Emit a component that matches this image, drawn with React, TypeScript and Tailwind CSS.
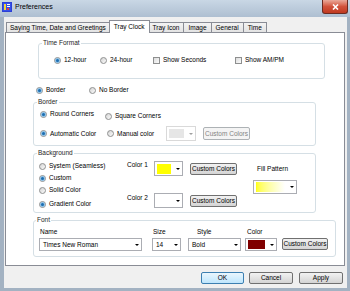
import type { ReactNode } from "react";

function Radio({ checked }: { checked?: boolean }) {
  return (
    <span className="flex h-[7px] w-[7px] shrink-0 items-center justify-center rounded-full border border-[#8e8f8f] bg-linear-to-br from-[#d4d4d4] to-[#fbfbfb]">
      {checked ? (
        <span className="h-[3px] w-[3px] rounded-full bg-[#1d6db0] shadow-[0_0_0_1px_#8cc0e6]" />
      ) : null}
    </span>
  );
}

function Checkbox() {
  return (
    <span className="h-[7px] w-[7px] shrink-0 border border-[#8e8f8f] bg-linear-to-br from-[#dcdcdc] to-[#fbfbfb]" />
  );
}

function Option({
  kind,
  checked,
  label,
  className = "",
}: {
  kind: "radio" | "check";
  checked?: boolean;
  label: string;
  className?: string;
}) {
  return (
    <div className={`flex h-[8px] shrink-0 items-center gap-[3px] ${className}`}>
      {kind === "radio" ? <Radio checked={checked} /> : <Checkbox />}
      <span className="whitespace-nowrap">{label}</span>
    </div>
  );
}

function Arrow({ disabled }: { disabled?: boolean }) {
  return (
    <span
      className={`h-0 w-0 border-x-[2px] border-t-[2px] border-x-transparent ${
        disabled ? "border-t-[#a0a0a0]" : "border-t-black"
      }`}
    />
  );
}

function Combo({
  className,
  children,
  disabled,
}: {
  className: string;
  children: ReactNode;
  disabled?: boolean;
}) {
  return (
    <div
      className={`flex shrink-0 border bg-white ${
        disabled ? "border-[#d9d9d9]" : "border-[#abadb3]"
      } ${className}`}
    >
      <div className="flex min-w-0 flex-1 items-center">{children}</div>
      <span className="flex w-[9px] items-center justify-center">
        <Arrow disabled={disabled} />
      </span>
    </div>
  );
}

function PushButton({
  label,
  className,
  disabled,
  isDefault,
}: {
  label: string;
  className: string;
  disabled?: boolean;
  isDefault?: boolean;
}) {
  const look = isDefault
    ? "border-[#3c7fb1] from-[#eaf6fd] to-[#bee6fd]"
    : disabled
      ? "border-[#adb2b5] from-[#f4f4f4] to-[#f4f4f4] text-[#838383]"
      : "border-[#707070] from-[#f2f2f2] to-[#d4d4d4]";
  return (
    <div
      className={`flex shrink-0 items-center justify-center rounded-[2px] border bg-linear-to-b whitespace-nowrap ${look} ${className}`}
    >
      {label}
    </div>
  );
}

function Group({
  title,
  className,
  children,
}: {
  title: string;
  className: string;
  children: ReactNode;
}) {
  return (
    <fieldset className={`shrink-0 rounded-[3px] border border-[#d5dfe5] ${className}`}>
      <legend className="px-[1px] leading-[8px] text-[#1e1e1e]">{title}</legend>
      {children}
    </fieldset>
  );
}

const TABS = ["Saying Time, Date and Greetings", "Tray Clock", "Tray Icon", "Image", "General", "Time"];

function TabStrip() {
  return (
    <div className="flex h-[12px] items-end pl-[2px]">
      {TABS.map((tab) =>
        tab === "Tray Clock" ? (
          <div
            key={tab}
            className="relative z-10 -mx-[1px] -mb-[1px] flex h-[13px] items-center border border-b-0 border-[#898c95] bg-white px-[4px] whitespace-nowrap"
          >
            {tab}
          </div>
        ) : (
          <div
            key={tab}
            className="-ml-[1px] flex h-[10px] items-center border border-b-0 border-[#898c95] bg-linear-to-b from-[#f3f3f3] to-[#e3e3e3] px-[3px] whitespace-nowrap first:ml-0 [&:not(:first-child)]:px-[4px]"
          >
            {tab}
          </div>
        ),
      )}
    </div>
  );
}

function TitleBar() {
  return (
    <div className="flex h-[17px] shrink-0 items-start bg-linear-to-b from-[#c9d7e5] to-[#aebfd1]">
      <svg className="ml-[2px] mt-[2px]" width="10" height="10" viewBox="0 0 10 10">
        <rect x="0" y="0" width="10" height="10" fill="#2b3fd6" />
        <rect x="1" y="1" width="8" height="8" fill="#3550e8" />
        <rect x="2" y="2" width="2" height="6" fill="#f2d23a" />
        <rect x="5" y="2" width="3" height="1" fill="#ffffff" />
        <rect x="5" y="4" width="3" height="1" fill="#ffffff" />
        <rect x="5" y="6" width="2" height="2" fill="#e04040" />
      </svg>
      <span className="ml-[3px] mt-[2px] text-[7px] leading-[9px]">Preferences</span>
      <div className="ml-auto mr-[2px] flex h-[14px] w-[26px] items-center justify-center rounded-b-[3px] border border-t-0 border-[#6b2b22] bg-linear-to-b from-[#e9a99a] via-[#d2533c] to-[#c0391f]">
        <svg width="7" height="6" viewBox="0 0 7 6">
          <path d="M1 0.5 L6 5.5 M6 0.5 L1 5.5" stroke="#ffffff" strokeWidth="1.6" />
        </svg>
      </div>
    </div>
  );
}

export default function App() {
  return (
    <div className="flex h-[291px] w-[350px] flex-col bg-[#a3b2c2] font-['Liberation_Sans',Arial,sans-serif] text-[6.5px] leading-[8px] text-black">
      <TitleBar />

      <div className="mb-[3px] ml-[4px] mr-[3px] flex flex-1 flex-col bg-[#f0f0f0] pt-[3px]">
        <TabStrip />

        <div className="ml-[1px] flex h-[234px] w-[340px] flex-col border border-[#898c95] bg-white">
          <Group title="Time Format" className="ml-[32px] mt-[6px] h-[40px] w-[287px] pl-[3px]">
            <div className="ml-[12px] mt-[9px] flex h-[8px] items-center">
              <Option kind="radio" checked label="12-hour" className="w-[46px]" />
              <Option kind="radio" label="24-hour" className="w-[53px]" />
              <Option kind="check" label="Show Seconds" className="w-[82px]" />
              <Option kind="check" label="Show AM/PM" />
            </div>
          </Group>

          <div className="ml-[30px] mt-[7px] flex h-[8px] items-center">
            <Option kind="radio" checked label="Border" className="w-[53px]" />
            <Option kind="radio" label="No Border" />
          </div>

          <Group title="Border" className="ml-[27px] mt-[4px] h-[48px] w-[283px] pl-[3px]">
            <div className="ml-[3px] mt-[4px] flex h-[8px] items-start">
              <Option kind="radio" checked label="Round Corners" className="w-[65px]" />
              <Option kind="radio" label="Square Corners" className="mt-[2px]" />
            </div>
            <div className="ml-[3px] mt-[8px] flex h-[15px] items-center">
              <Option kind="radio" checked label="Automatic Color" className="w-[67px]" />
              <Option kind="radio" label="Manual color" className="w-[59px]" />
              <Combo disabled className="h-[15px] w-[30px]">
                <span className="m-[2px] h-[9px] flex-1 bg-[#e6e6e6]" />
              </Combo>
              <PushButton disabled label="Custom Colors" className="ml-[7px] h-[13px] w-[47px]" />
            </div>
          </Group>

          <Group title="Background" className="ml-[27px] mt-[3px] h-[64px] w-[283px] pl-[3px]">
            <div className="flex">
              <div className="ml-[2px] flex w-[88px] flex-col">
                <Option kind="radio" label="System (Seamless)" className="mt-[5px]" />
                <Option kind="radio" checked label="Custom" className="mt-[4px]" />
                <Option kind="radio" label="Solid Color" className="mt-[4px]" />
                <Option kind="radio" checked label="Gradient Color" className="mt-[6px]" />
              </div>
              <div className="flex flex-col">
                <div className="mt-[4px] flex items-start">
                  <span className="w-[27px]">Color 1</span>
                  <Combo className="h-[15px] w-[29px]">
                    <span className="m-[2px] h-[10px] flex-1 bg-[#ffff00]" />
                  </Combo>
                  <PushButton label="Custom Colors" className="ml-[7px] mt-[2px] h-[12px] w-[47px]" />
                </div>
                <div className="mt-[17px] flex items-start">
                  <span className="mt-[1px] w-[27px]">Color 2</span>
                  <Combo className="h-[15px] w-[29px]">
                    <span className="m-[2px] h-[10px] flex-1 bg-white" />
                  </Combo>
                  <PushButton label="Custom Colors" className="ml-[7px] mt-[2px] h-[12px] w-[47px]" />
                </div>
              </div>
              <div className="ml-[16px] flex flex-col">
                <span className="ml-[4px] mt-[8px]">Fill Pattern</span>
                <Combo className="mt-[7px] h-[14px] w-[44px]">
                  <span className="m-[2px] h-[10px] flex-1 bg-linear-to-r from-[#ffff00] to-white" />
                </Combo>
              </div>
            </div>
          </Group>

          <Group title="Font" className="ml-[27px] mt-[3px] h-[41px] w-[303px] pl-[2px]">
            <div className="ml-[3px] mt-[4px] flex items-end">
              <div className="flex w-[103px] flex-col">
                <span className="ml-[1px]">Name</span>
                <Combo className="mt-[2px] h-[13px] w-full">
                  <span className="ml-[3px] whitespace-nowrap">Times New Roman</span>
                </Combo>
              </div>
              <div className="ml-[10px] flex w-[29px] flex-col">
                <span className="ml-[1px]">Size</span>
                <Combo className="mt-[2px] h-[13px] w-full">
                  <span className="ml-[3px]">14</span>
                </Combo>
              </div>
              <div className="ml-[7px] flex w-[53px] flex-col">
                <span className="ml-[9px]">Style</span>
                <Combo className="mt-[2px] h-[13px] w-full">
                  <span className="ml-[3px]">Bold</span>
                </Combo>
              </div>
              <div className="ml-[4px] flex w-[32px] flex-col">
                <span className="ml-[2px]">Color</span>
                <Combo className="mt-[2px] h-[13px] w-full">
                  <span className="m-[2px] h-[9px] flex-1 bg-[#800000]" />
                </Combo>
              </div>
              <PushButton label="Custom Colors" className="mb-[1px] ml-[5px] h-[12px] w-[46px]" />
            </div>
          </Group>
        </div>

        <div className="mt-[6px] flex justify-end pr-[4px]">
          <PushButton isDefault label="OK" className="h-[12px] w-[43px]" />
          <PushButton label="Cancel" className="ml-[5px] h-[12px] w-[44px]" />
          <PushButton label="Apply" className="ml-[6px] h-[12px] w-[44px]" />
        </div>
      </div>
    </div>
  );
}
